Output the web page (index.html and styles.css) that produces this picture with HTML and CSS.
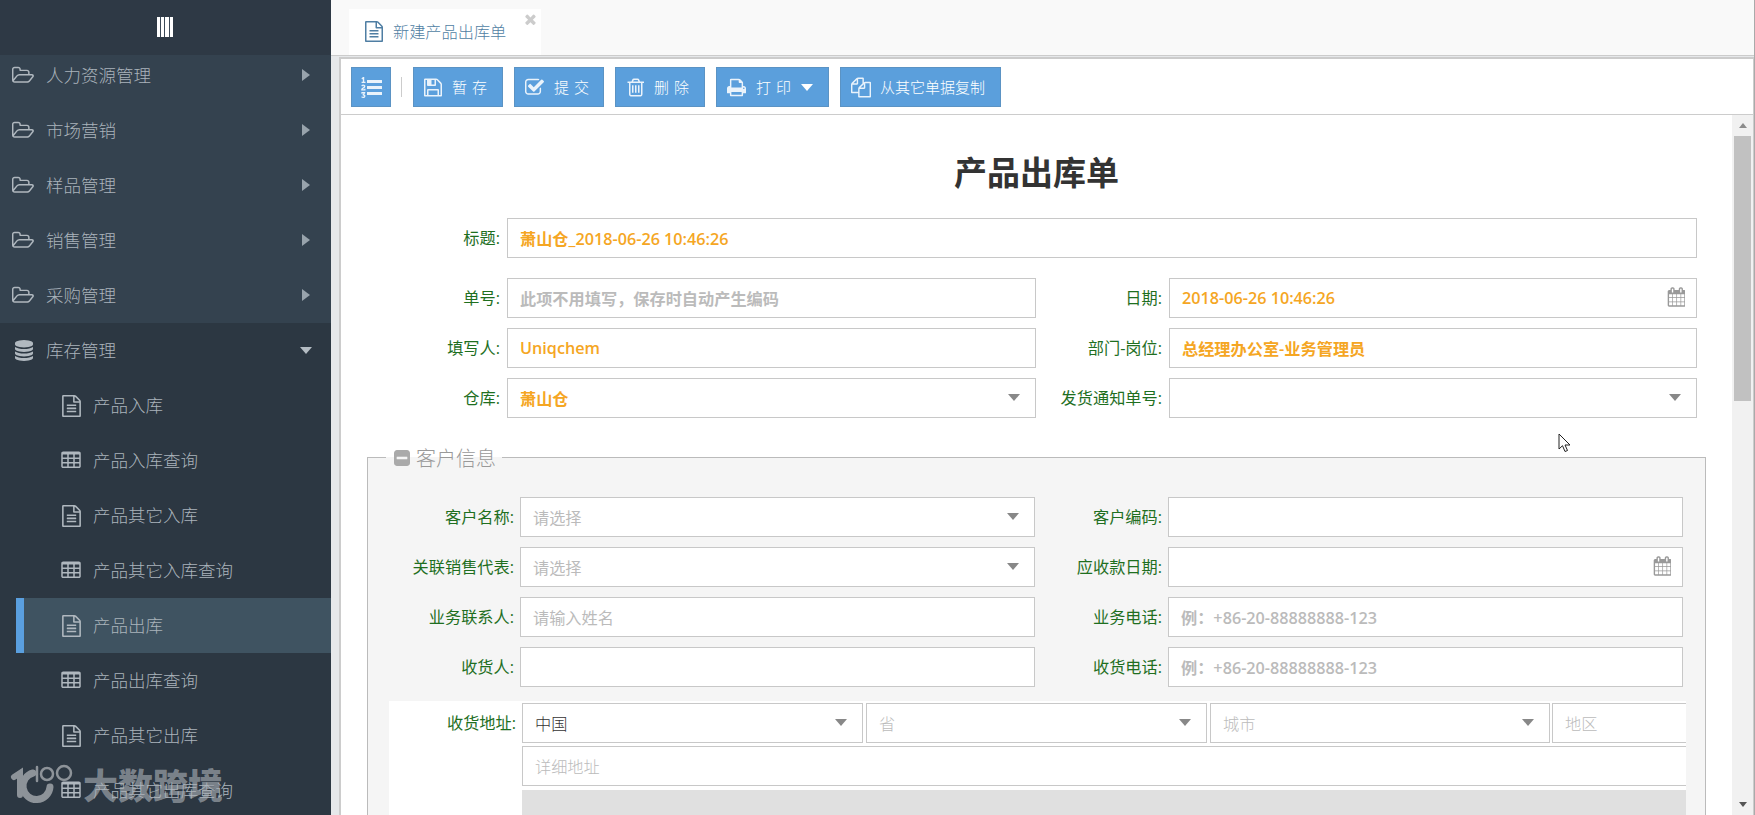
FILE: index.html
```html
<!DOCTYPE html>
<html lang="zh-CN">
<head>
<meta charset="utf-8">
<title>产品出库单</title>
<link rel="stylesheet" href="styles.css">
</head>
<body>
<svg class="defs" aria-hidden="true">
  <symbol id="i-folder" viewBox="0 0 1920 1792"><path d="M1781 931q0-35-53-35h-1088q-40 0-85.500 21.500t-71.500 52.500l-294 363q-18 24-18 40 0 35 53 35h1088q40 0 86-22t71-53l294-363q18-22 18-39zm-1141-163h768v-160q0-40-28-68t-68-28h-576q-40 0-68-28t-28-68v-64q0-40-28-68t-68-28h-320q-40 0-68 28t-28 68v853l256-315q44-53 116-87.500t140-34.500zm1269 163q0 62-46 120l-295 363q-43 53-116 87.500t-140 34.500h-1088q-92 0-158-66t-66-158v-960q0-92 66-158t158-66h320q92 0 158 66t66 158v32h544q92 0 158 66t66 158v160h192q54 0 99 24.500t67 70.500q15 32 15 68z"/></symbol>
  <symbol id="i-db" viewBox="128 0 1536 1792"><path d="M896 768q237 0 443-43t325-127v170q0 69-103 128t-280 93.500-385 34.500-385-34.500-280-93.500-103-128v-170q119 84 325 127t443 43zm0 768q237 0 443-43t325-127v170q0 69-103 128t-280 93.500-385 34.500-385-34.500-280-93.500-103-128v-170q119 84 325 127t443 43zm0-384q237 0 443-43t325-127v170q0 69-103 128t-280 93.500-385 34.500-385-34.500-280-93.500-103-128v-170q119 84 325 127t443 43zm0-1152q208 0 385 34.500t280 93.500 103 128v128q0 69-103 128t-280 93.500-385 34.500-385-34.500-280-93.500-103-128v-128q0-69 103-128t280-93.500 385-34.500z"/></symbol>
  <symbol id="i-doc" viewBox="128 0 1536 1792"><path d="M1596 380q28 28 48 76t20 88v1152q0 40-28 68t-68 28h-1344q-40 0-68-28t-28-68v-1600q0-40 28-68t68-28h896q40 0 88 20t76 48zm-444-244v376h376q-10-29-22-41l-313-313q-12-12-41-22zm384 1528v-1024h-416q-40 0-68-28t-28-68v-416h-768v1536h1280zm-1024-864q0-14 9-23t23-9h704q14 0 23 9t9 23v64q0 14-9 23t-23 9h-704q-14 0-23-9t-9-23v-64zm736 224q14 0 23 9t9 23v64q0 14-9 23t-23 9h-704q-14 0-23-9t-9-23v-64q0-14 9-23t23-9h704zm0 256q14 0 23 9t9 23v64q0 14-9 23t-23 9h-704q-14 0-23-9t-9-23v-64q0-14 9-23t23-9h704z"/></symbol>
  <symbol id="i-table" viewBox="64 0 1664 1792"><path d="M576 1376v-192q0-14-9-23t-23-9h-320q-14 0-23 9t-9 23v192q0 14 9 23t23 9h320q14 0 23-9t9-23zm0-384v-192q0-14-9-23t-23-9h-320q-14 0-23 9t-9 23v192q0 14 9 23t23 9h320q14 0 23-9t9-23zm512 384v-192q0-14-9-23t-23-9h-320q-14 0-23 9t-9 23v192q0 14 9 23t23 9h320q14 0 23-9t9-23zm-512-768v-192q0-14-9-23t-23-9h-320q-14 0-23 9t-9 23v192q0 14 9 23t23 9h320q14 0 23-9t9-23zm512 384v-192q0-14-9-23t-23-9h-320q-14 0-23 9t-9 23v192q0 14 9 23t23 9h320q14 0 23-9t9-23zm512 384v-192q0-14-9-23t-23-9h-320q-14 0-23 9t-9 23v192q0 14 9 23t23 9h320q14 0 23-9t9-23zm-512-768v-192q0-14-9-23t-23-9h-320q-14 0-23 9t-9 23v192q0 14 9 23t23 9h320q14 0 23-9t9-23zm512 384v-192q0-14-9-23t-23-9h-320q-14 0-23 9t-9 23v192q0 14 9 23t23 9h320q14 0 23-9t9-23zm0-384v-192q0-14-9-23t-23-9h-320q-14 0-23 9t-9 23v192q0 14 9 23t23 9h320q14 0 23-9t9-23zm128-320v1088q0 66-47 113t-113 47h-1344q-66 0-113-47t-47-113v-1088q0-66 47-113t113-47h1344q66 0 113 47t47 113z"/></symbol>
  <symbol id="i-save" viewBox="0 0 1536 1792"><path d="M384 1536h768v-384h-768v384zm896 0h128v-896q0-14-10-38.500t-20-34.500l-281-281q-10-10-34-20t-39-10v416q0 40-28 68t-68 28h-576q-40 0-68-28t-28-68v-416h-128v1280h128v-416q0-40 28-68t68-28h832q40 0 68 28t28 68v416zm-384-928v-320q0-13-9.500-22.500t-22.500-9.500h-192q-13 0-22.500 9.500t-9.500 22.500v320q0 13 9.500 22.500t22.500 9.500h192q13 0 22.500-9.500t9.500-22.500zm640 32v928q0 40-28 68t-68 28h-1344q-40 0-68-28t-28-68v-1344q0-40 28-68t68-28h928q40 0 88 20t76 48l280 280q28 28 48 76t20 88z"/></symbol>
  <symbol id="i-check" viewBox="64 0 1664 1792"><path d="M1472 930v318q0 119-84.500 203.500t-203.500 84.500h-832q-119 0-203.500-84.500t-84.500-203.500v-832q0-119 84.500-203.500t203.500-84.500h832q63 0 117 25 15 7 18 23 3 17-9 29l-49 49q-10 10-23 10-3 0-9-2-23-6-45-6h-832q-66 0-113 47t-47 113v832q0 66 47 113t113 47h832q66 0 113-47t47-113v-254q0-13 9-22l64-64q10-10 23-10 6 0 12 3 20 8 20 29zm231-489l-814 814q-24 24-57 24t-57-24l-430-430q-24-24-24-57t24-57l110-110q24-24 57-24t57 24l263 263 647-647q24-24 57-24t57 24l110 110q24 24 24 57t-24 57z"/></symbol>
  <symbol id="i-trash" viewBox="128 0 1408 1792"><path d="M704 736v576q0 14-9 23t-23 9h-64q-14 0-23-9t-9-23v-576q0-14 9-23t23-9h64q14 0 23 9t9 23zm256 0v576q0 14-9 23t-23 9h-64q-14 0-23-9t-9-23v-576q0-14 9-23t23-9h64q14 0 23 9t9 23zm256 0v576q0 14-9 23t-23 9h-64q-14 0-23-9t-9-23v-576q0-14 9-23t23-9h64q14 0 23 9t9 23zm128 724v-948h-896v948q0 22 7 40.500t14.500 27 10.500 8.500h832q3 0 10.500-8.500t14.500-27 7-40.500zm-672-1076h448l-48-117q-7-9-17-11h-317q-10 2-17 11zm928 32v64q0 14-9 23t-23 9h-96v948q0 83-47 143.500t-113 60.500h-832q-66 0-113-63t-47-145v-944h-96q-14 0-23-9t-9-23v-64q0-14 9-23t23-9h309l70-167q15-37 54-63t79-26h320q40 0 79 26t54 63l70 167h309q14 0 23 9t9 23z"/></symbol>
  <symbol id="i-print" viewBox="64 0 1664 1792"><path d="M448 1536h896v-256h-896v256zm0-640h896v-384h-160q-40 0-68-28t-28-68v-160h-640v640zm1152 64q0-26-19-45t-45-19-45 19-19 45 19 45 45 19 45-19 19-45zm128 0v416q0 13-9.500 22.500t-22.500 9.500h-224v160q0 40-28 68t-68 28h-960q-40 0-68-28t-28-68v-160h-224q-13 0-22.500-9.500t-9.500-22.500v-416q0-79 56.500-135.500t135.500-56.500h64v-544q0-40 28-68t68-28h672q40 0 88 20t76 48l152 152q28 28 48 76t20 88v256h64q79 0 135.500 56.500t56.500 135.500z"/></symbol>
  <symbol id="i-files" viewBox="0 0 1792 1792"><path d="M1696 384q40 0 68 28t28 68v1216q0 40-28 68t-68 28h-960q-40 0-68-28t-28-68v-288h-544q-40 0-68-28t-28-68v-672q0-40 20-88t48-76l408-408q28-28 76-48t88-20h416q40 0 68 28t28 68v328q68-40 128-40h416zm-544 213l-299 299h299v-299zm-640-384l-299 299h299v-299zm196 647l316-316v-416h-384v416q0 40-28 68t-68 28h-416v640h512v-256q0-40 20-88t48-76zm956 804v-1152h-384v416q0 40-28 68t-68 28h-416v640h896z"/></symbol>
  <symbol id="i-list" viewBox="0 0 1792 1792"><path d="M381 1620q0 80-54.500 126t-135.500 46q-106 0-172-66l57-88q49 45 106 45 29 0 50.500-14.500t21.500-42.500q0-64-105-56l-26-56q8-10 32.500-43.500t42.500-54 37-38.500v-1q-16 0-48.500 1t-48.500 1v53h-106v-152h333v88l-95 115q51 12 81 49t30 88zm2-627v159h-362q-6-36-6-54 0-51 23.500-93t56.500-68 66-47.500 56.500-43.500 23.500-45q0-25-14.500-38.500t-39.500-13.500q-46 0-81 58l-85-59q24-51 71.500-79.500t105.500-28.500q73 0 123 41.500t50 112.500q0 50-34 91.500t-75 64.500-75.500 50.500-35.500 52.500h127v-60h105zm1409 319v192q0 13-9.500 22.500t-22.500 9.500h-1216q-13 0-22.500-9.500t-9.500-22.500v-192q0-14 9-23t23-9h1216q13 0 22.500 9.500t9.500 22.500zm-1408-899v99h-335v-99h107q0-41 .5-122t.5-121v-12h-2q-8 17-50 54l-71-76 136-127h106v404h108zm1408 387v192q0 13-9.500 22.500t-22.500 9.500h-1216q-13 0-22.500-9.500t-9.500-22.500v-192q0-14 9-23t23-9h1216q13 0 22.500 9.500t9.500 22.500zm0-512v192q0 13-9.500 22.500t-22.500 9.500h-1216q-13 0-22.500-9.500t-9.500-22.500v-192q0-13 9.500-22.500t22.500-9.500h1216q13 0 22.500 9.500t9.500 22.500z"/></symbol>
  <symbol id="i-cal" viewBox="0 0 1664 1792"><path d="M192 1664h288v-288h-288v288zm352 0h320v-288h-320v288zm-352-352h288v-320h-288v320zm352 0h320v-320h-320v320zm-352-384h288v-288h-288v288zm736 736h320v-288h-320v288zm-384-736h320v-288h-320v288zm768 736h288v-288h-288v288zm-384-352h320v-320h-320v320zm-352-864v-288q0-13-9.500-22.500t-22.500-9.500h-64q-13 0-22.500 9.500t-9.500 22.500v288q0 13 9.500 22.500t22.500 9.500h64q13 0 22.500-9.500t9.500-22.500zm736 864h288v-320h-288v320zm-384-384h320v-288h-320v288zm384 0h288v-288h-288v288zm32-480v-288q0-13-9.500-22.500t-22.500-9.500h-64q-13 0-22.500 9.500t-9.500 22.500v288q0 13 9.500 22.500t22.500 9.500h64q13 0 22.500-9.500t9.500-22.500zm384-64v1280q0 52-38 90t-90 38h-1408q-52 0-90-38t-38-90v-1280q0-52 38-90t90-38h128v-96q0-66 47-113t113-47h64q66 0 113 47t47 113v96h384v-96q0-66 47-113t113-47h64q66 0 113 47t47 113v96h128q52 0 90 38t38 90z"/></symbol>
  <symbol id="i-minus" viewBox="0 128 1536 1536"><path d="M1408 960v-128q0-26-19-45t-45-19h-896q-26 0-45 19t-19 45v128q0 26 19 45t45 19h896q26 0 45-19t19-45zm256-544v960q0 119-84.500 203.500t-203.500 84.500h-960q-119 0-203.500-84.500t-84.500-203.500v-960q0-119 84.500-203.500t203.500-84.500h960q119 0 203.500 84.500t84.500 203.500z" transform="translate(-128)"/></symbol>
  <symbol id="i-x" viewBox="300 300 1200 1260"><path d="M1490 1322q0 40-28 68l-136 136q-28 28-68 28t-68-28l-294-294-294 294q-28 28-68 28t-68-28l-136-136q-28-28-28-68t28-68l294-294-294-294q-28-28-28-68t28-68l136-136q28-28 68-28t68 28l294 294 294-294q28-28 68-28t68 28l136 136q28 28 28 68t-28 68l-294 294 294 294q28 28 28 68z"/></symbol>
</svg>

<aside class="sidebar">
  <div class="side-head"><span class="bars"></span></div>
  <div class="side-scroll">
    <ul class="menu">
      <li class="item top"><svg class="ic ic-folder"><use href="#i-folder"/></svg><span class="lbl">人力资源管理</span><i class="car-r"></i></li>
      <li class="item top"><svg class="ic ic-folder"><use href="#i-folder"/></svg><span class="lbl">市场营销</span><i class="car-r"></i></li>
      <li class="item top"><svg class="ic ic-folder"><use href="#i-folder"/></svg><span class="lbl">样品管理</span><i class="car-r"></i></li>
      <li class="item top"><svg class="ic ic-folder"><use href="#i-folder"/></svg><span class="lbl">销售管理</span><i class="car-r"></i></li>
      <li class="item top"><svg class="ic ic-folder"><use href="#i-folder"/></svg><span class="lbl">采购管理</span><i class="car-r"></i></li>
      <li class="item open"><svg class="ic ic-db"><use href="#i-db"/></svg><span class="lbl">库存管理</span><i class="car-d"></i></li>
      <li class="item sub"><svg class="ic ic-doc"><use href="#i-doc"/></svg><span class="lbl">产品入库</span></li>
      <li class="item sub"><svg class="ic ic-table"><use href="#i-table"/></svg><span class="lbl">产品入库查询</span></li>
      <li class="item sub"><svg class="ic ic-doc"><use href="#i-doc"/></svg><span class="lbl">产品其它入库</span></li>
      <li class="item sub"><svg class="ic ic-table"><use href="#i-table"/></svg><span class="lbl">产品其它入库查询</span></li>
      <li class="item sub active"><svg class="ic ic-doc"><use href="#i-doc"/></svg><span class="lbl">产品出库</span></li>
      <li class="item sub"><svg class="ic ic-table"><use href="#i-table"/></svg><span class="lbl">产品出库查询</span></li>
      <li class="item sub"><svg class="ic ic-doc"><use href="#i-doc"/></svg><span class="lbl">产品其它出库</span></li>
      <li class="item sub"><svg class="ic ic-table"><use href="#i-table"/></svg><span class="lbl">产品其它出库查询</span></li>
    </ul>
  </div>
</aside>

<main class="main">
  <nav class="tabs">
    <div class="tab">
      <svg class="tab-ic"><use href="#i-doc"/></svg>
      <span>新建产品出库单</span>
      <svg class="tab-x"><use href="#i-x"/></svg>
    </div>
  </nav>
  <section class="panel">
    <div class="toolbar">
      <button class="btn btn-icon"><svg class="bi bi-list"><use href="#i-list"/></svg></button>
      <span class="sep"></span>
      <button class="btn"><svg class="bi bi-save"><use href="#i-save"/></svg><span class="spaced">暂存</span></button>
      <button class="btn"><svg class="bi bi-check"><use href="#i-check"/></svg><span class="spaced">提交</span></button>
      <button class="btn"><svg class="bi bi-trash"><use href="#i-trash"/></svg><span class="spaced">删除</span></button>
      <button class="btn btn-print"><svg class="bi bi-print"><use href="#i-print"/></svg><span class="spaced">打印</span><i class="btn-car"></i></button>
      <button class="btn btn-copy"><svg class="bi bi-files"><use href="#i-files"/></svg><span>从其它单据复制</span></button>
    </div>
    <div class="body">
      <form class="sheet">
        <h1 class="title">产品出库单</h1>
        <div class="grid head-grid">
          <label class="lab wide-gap">标题:</label>
          <div class="ctl span3 wide-gap val">萧山仓_2018-06-26 10:46:26</div>
          <label class="lab">单号:</label>
          <div class="ctl ph-bold">此项不用填写，保存时自动产生编码</div>
          <label class="lab">日期:</label>
          <div class="ctl val end"><span>2018-06-26 10:46:26</span><svg class="cal"><use href="#i-cal"/></svg></div>
          <label class="lab">填写人:</label>
          <div class="ctl val">Uniqchem</div>
          <label class="lab">部门-岗位:</label>
          <div class="ctl val">总经理办公室-业务管理员</div>
          <label class="lab">仓库:</label>
          <div class="ctl val end"><span>萧山仓</span><i class="sel-car"></i></div>
          <label class="lab">发货通知单号:</label>
          <div class="ctl end"><span></span><i class="sel-car"></i></div>
        </div>

        <fieldset class="group">
          <legend class="legend"><svg class="leg-ic"><use href="#i-minus"/></svg><span>客户信息</span></legend>
          <div class="grid cust-grid">
            <label class="lab">客户名称:</label>
            <div class="ctl ph end"><span>请选择</span><i class="sel-car"></i></div>
            <label class="lab">客户编码:</label>
            <div class="ctl"></div>
            <label class="lab">关联销售代表:</label>
            <div class="ctl ph end"><span>请选择</span><i class="sel-car"></i></div>
            <label class="lab">应收款日期:</label>
            <div class="ctl end"><span></span><svg class="cal"><use href="#i-cal"/></svg></div>
            <label class="lab">业务联系人:</label>
            <div class="ctl ph">请输入姓名</div>
            <label class="lab">业务电话:</label>
            <div class="ctl ph-bold">例：+86-20-88888888-123</div>
            <label class="lab">收货人:</label>
            <div class="ctl"></div>
            <label class="lab">收货电话:</label>
            <div class="ctl ph-bold">例：+86-20-88888888-123</div>
          </div>
          <div class="addr">
            <label class="lab addr-lab">收货地址:</label>
            <div class="addr-main">
              <div class="addr-row">
                <div class="ctl end plain"><span>中国</span><i class="sel-car"></i></div>
                <div class="ctl ph-thin end"><span>省</span><i class="sel-car"></i></div>
                <div class="ctl ph-thin end"><span>城市</span><i class="sel-car"></i></div>
                <div class="ctl ph-thin end"><span>地区</span></div>
              </div>
              <div class="ctl ph-thin addr-detail">详细地址</div>
              <div class="map"></div>
            </div>
          </div>
        </fieldset>
      </form>
      <div class="scrollbar">
        <div class="sb-btn"><i class="sb-up"></i></div>
        <div class="sb-thumb"></div>
        <div class="sb-track"></div>
        <div class="sb-btn"><i class="sb-down"></i></div>
      </div>
    </div>
  </section>
</main>

<svg class="cursor" viewBox="0 0 13 20"><path d="M1 1V16L4.500 12.700L7 18.500L9.500 17.500L7 12H12Z" fill="#fff" stroke="#222" stroke-width="1"/></svg>

<div class="watermark">
  <svg class="wm-logo" viewBox="0 0 80 65">
    <g fill="none" stroke="#93989e" stroke-linecap="round">
      <path d="M14 27L20 23V45" stroke-width="6"/>
      <path d="M33 23A13.500 13.500 0 1 0 50 37" stroke-width="7"/>
      <path d="M37 17V31" stroke-width="2.500"/>
      <circle cx="47" cy="24" r="6" stroke-width="2.500"/>
      <circle cx="64" cy="23" r="7" stroke-width="2.500"/>
    </g>
  </svg>
  <span class="wm-text">大数跨境</span>
</div>
</body>
</html>
```

FILE: styles.css
```css
* { box-sizing: border-box; }
html, body { height: 100%; }
body {
  margin: 0;
  display: flex;
  height: 815px;
  overflow: hidden;
  position: relative;
  font-family: "Open Sans", "Noto Sans CJK SC", sans-serif;
  font-size: 16.2px;
  background: #fff;
}
.defs { position: absolute; width: 0; height: 0; }
svg { fill: currentColor; display: block; flex: none; }

/* sidebar */
.sidebar {
  width: 331px;
  flex: none;
  background: #2c3742;
  display: flex;
  flex-direction: column;
  color: #aab3bb;
}
.side-head {
  height: 55px;
  flex: none;
  display: flex;
  align-items: center;
  justify-content: center;
  background: #2e3945;
}
.bars {
  width: 16px;
  height: 20px;
  margin-right: 2px;
  margin-top: -1px;
  background: repeating-linear-gradient(90deg, #fff 0, #fff 3.2px, #3c4a58 3.2px, #3c4a58 4.2px);
}
.side-scroll { flex: 1; overflow: hidden; min-height: 0; }
.menu { list-style: none; margin: -7px 0 0; padding: 0; }
.item {
  height: 55px;
  display: flex;
  align-items: center;
  font-size: 17.5px;
  font-weight: 300;
  line-height: 1;
  padding-left: 12px;
  position: relative;
}
.top { background: #34424f; }
.open { padding-left: 15px; }
.sub { padding-left: 61px; }
.active { margin-left: 16px; padding-left: 37px; background: #3f5361; border-left: 8px solid #5a9fdf; }
.lbl { white-space: nowrap; }
.ic { margin-right: 12px; color: #b0b8bf; }
.ic-folder { width: 22px; height: 21px; }
.ic-db { width: 18px; height: 21px; margin-right: 13px; }
.ic-doc { width: 19px; height: 22px; margin-left: 1px; margin-right: 12px; }
.ic-table { width: 20px; height: 21px; margin-right: 12px; }
.car-r {
  position: absolute; left: 302px; top: 21px;
  border-style: solid; border-width: 6px 0 6px 8px;
  border-color: transparent transparent transparent #98a3ac;
}
.car-d {
  position: absolute; left: 300px; top: 24px;
  border-style: solid; border-width: 7px 6.5px 0 6.5px;
  border-color: #b4bcc3 transparent transparent transparent;
}

/* main */
.main {
  flex: 1;
  min-width: 0;
  display: flex;
  flex-direction: column;
  border-right: 1px solid #aaa;
  background: #e6e8ea;
}
.tabs {
  height: 56px;
  flex: none;
  background: #f9f9f9;
  border-bottom: 1px solid #ccc;
  padding: 9px 0 0 18px;
  margin-bottom: 1px;
}
.tab {
  width: 192px;
  height: 46px;
  background: #fff;
  display: flex;
  align-items: center;
  padding: 0 0 2px 16px;
  position: relative;
  color: #4f7ea3;
  font-weight: 300;
}
.tab-ic { width: 18px; height: 21px; margin-right: 10px; margin-top: 1px; }
.tab-x { position: absolute; right: 5px; top: 5px; width: 11px; height: 11px; color: #ccc; }

.panel {
  flex: 1;
  min-height: 0;
  margin-left: 8px;
  background: #fff;
  border-top: 2px solid #ccc;
  border-left: 2px solid #ccc;
  border-right: 1px solid #ccc;
  display: flex;
  flex-direction: column;
}
.toolbar {
  height: 56px;
  flex: none;
  border-bottom: 1px solid #ccc;
  display: flex;
  align-items: center;
  gap: 11px;
  padding: 8px 0 7px 10px;
}
.btn {
  width: 90px;
  height: 40px;
  flex: none;
  border: 1px solid #5b93c4;
  background: #5b9fdc;
  color: #fff;
  font: inherit;
  font-size: 15px;
  font-weight: 300;
  padding: 0 0 0 10px;
  display: flex;
  align-items: center;
  line-height: 1;
  white-space: nowrap;
}
.btn-icon { width: 40px; padding: 0; justify-content: center; }
.sep { width: 1px; height: 20px; background: #ccc; margin-left: -1px; }
.spaced { letter-spacing: 5px; }
.bi { margin-right: 10px; color: #eaf3fb; }
.bi-list { width: 21px; height: 21px; margin: 0; }
.bi-save { width: 18px; height: 21px; }
.bi-check { width: 19px; height: 21px; }
.bi-trash { width: 18px; height: 21px; }
.bi-print { width: 19px; height: 21px; margin-right: 10px; }
.bi-files { width: 20px; height: 21px; margin-right: 9px; }
.btn-print { width: 113px; }
.btn-copy { width: 161px; }
.btn-car {
  margin-left: 5px;
  border-style: solid; border-width: 7px 6px 0 6px;
  border-color: #fff transparent transparent transparent;
}

.body { flex: 1; min-height: 0; display: flex; }
.sheet { flex: 1; min-width: 0; overflow: hidden; }
.title {
  margin: 0;
  height: 103px;
  padding-top: 38px;
  text-align: center;
  font-size: 33px;
  line-height: 40px;
  font-weight: 700;
  color: #333;
}
.grid { display: grid; row-gap: 10px; }
.head-grid { grid-template-columns: 159px 529px 119px 528px; column-gap: 7px; }
.cust-grid { grid-template-columns: 146px 515px 121px 515px; column-gap: 6px; }
.lab {
  display: flex;
  align-items: center;
  justify-content: flex-end;
  white-space: nowrap;
  color: #1f6f1f;
  font-weight: 400;
  line-height: 1;
}
.ctl {
  height: 40px;
  border: 1px solid #c8c8c8;
  background: #fff;
  display: flex;
  align-items: center;
  padding: 0 12px 1px;
  white-space: nowrap;
  color: #333;
}
.end { justify-content: space-between; }
.span3 { grid-column: 2 / 5; }
.wide-gap { margin-bottom: 10px; }
.val { color: #f5a623; font-weight: 600; }
.ph { color: #bbb; }
.ph-bold { color: #bbb; font-weight: 600; }
.ph-thin { color: #bbb; font-weight: 300; }
.plain { font-weight: 300; }
.sel-car {
  margin-right: 3px;
  border-style: solid; border-width: 7px 6px 0 6px;
  border-color: #888 transparent transparent transparent;
  margin-top: -1px;
}
.cal { width: 18px; height: 20px; color: #999; margin-right: -1px; margin-top: -1px; }

.group {
  margin: 23px 0 0 26px;
  width: 1339px;
  min-width: 0;
  padding: 24px 0 0;
  border: 1px solid #bbb;
  background: #f5f5f5;
}
.legend {
  margin-left: 18px;
  padding: 4px 6px 0 8px;
  display: flex;
  align-items: center;
  gap: 6px;
  font-size: 20px;
  font-weight: 300;
  line-height: 28px;
  color: #999;
}
.leg-ic { width: 16px; height: 16px; color: #aaa; margin-top: -3px; }
.addr {
  margin: 14px 0 0 21px;
  width: 1297px;
  background: #fff;
  padding-top: 2px;
  display: grid;
  grid-template-columns: 127px 1fr;
  column-gap: 6px;
  overflow: hidden;
}
.addr-lab { height: 40px; }
.addr-main { min-width: 0; overflow: hidden; }
.addr-row { display: flex; gap: 3px; }
.addr-row .ctl { width: 341px; flex: none; }
.addr-row .ctl:nth-child(3) { width: 340px; margin-right: -1px; }
.addr-detail { margin-top: 3px; width: 1300px; }
.map { margin-top: 4px; height: 80px; background: #e0e0e0; }

.scrollbar {
  width: 21px;
  flex: none;
  background: #f1f1f1;
  display: flex;
  flex-direction: column;
  align-items: center;
}
.sb-btn { height: 21px; width: 100%; flex: none; display: flex; align-items: center; justify-content: center; }
.sb-thumb { width: 17px; height: 265px; flex: none; background: #c1c1c1; }
.sb-track { flex: 1; }
.sb-up {
  border-style: solid; border-width: 0 4.5px 5px 4.5px;
  border-color: transparent transparent #8c8c8c transparent;
}
.sb-down {
  border-style: solid; border-width: 5px 4.5px 0 4.5px;
  border-color: #555 transparent transparent transparent;
}

/* overlays */
.cursor { position: absolute; left: 1558px; top: 433px; width: 13px; height: 20px; }
.watermark {
  position: absolute;
  left: 0;
  top: 750px;
  width: 240px;
  height: 65px;
  pointer-events: none;
}
.wm-logo { position: absolute; left: 0; top: 0; width: 80px; height: 65px; opacity: .95; }
.wm-text {
  position: absolute;
  left: 83px;
  top: 14px;
  font-size: 35px;
  line-height: 44px;
  font-weight: 900;
  color: rgba(175, 180, 186, .62);
  white-space: nowrap;
}
```
